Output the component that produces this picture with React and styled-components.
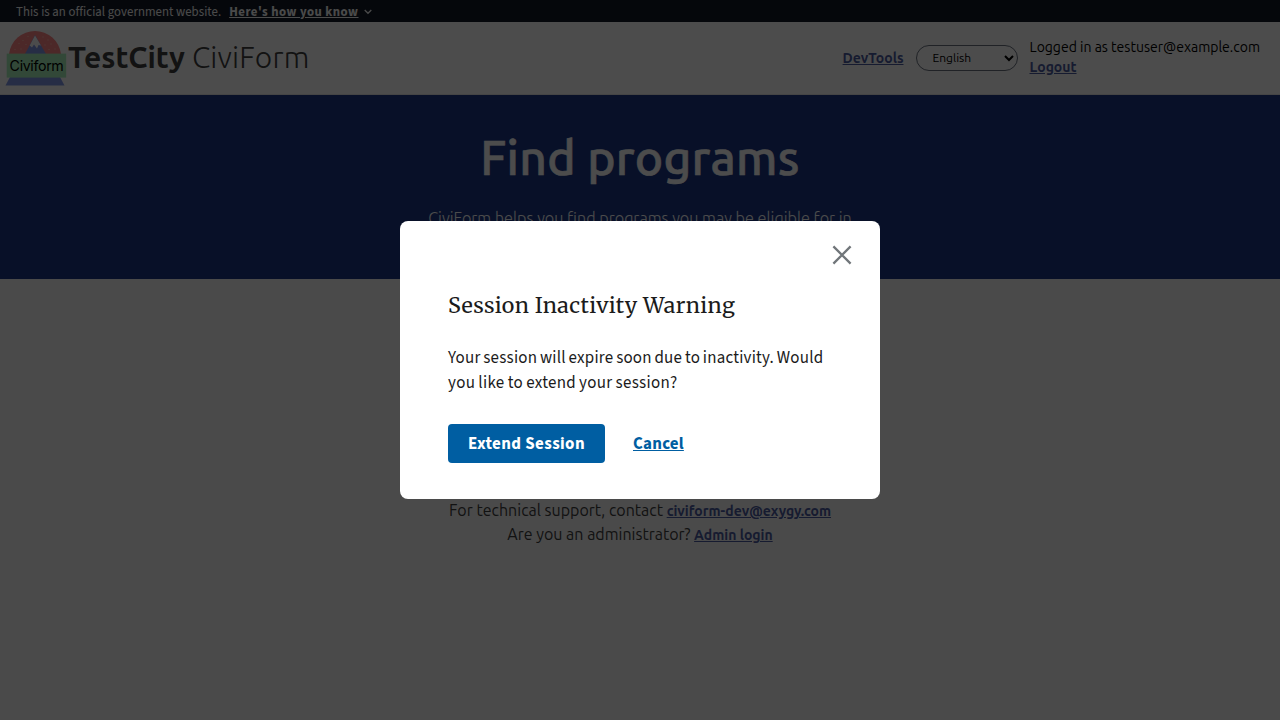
import React from "react";
import styled, { createGlobalStyle } from "styled-components";

const ubuntu = `"Ubuntu", "Noto Sans", "Open Sans", sans-serif`;
const source = `"Source Sans 3", "Noto Sans CJK SC", sans-serif`;
const merri = `"Merriweather", "DejaVu Serif", serif`;

const GlobalStyle = createGlobalStyle`
  * { box-sizing: border-box; }
  body { margin: 0; background: #f8f8f8; color: #1b1b1b; overflow: hidden; font-family: ${ubuntu}; }
  h1, h2, p { margin: 0; font-weight: 400; }
`;

const Page = styled.div`
  height: 720px;
  overflow: hidden;
`;

const Banner = styled.div`
  height: 22px;
  padding: 1px 0 0 16px;
  display: flex;
  align-items: center;
  background: #111827;
  color: #f8f8f8;
  font-family: ${source};
  font-size: 12.8px;
  letter-spacing: 0.05px;
  line-height: 22px;
  white-space: nowrap;
`;

const BannerButton = styled.button`
  border: 0;
  padding: 0;
  margin: 0 5px 0 8px;
  background: none;
  color: inherit;
  font: 700 12.8px/22px ${source};
  letter-spacing: 0.48px;
  text-decoration: underline;
`;

const Header = styled.header`
  height: 73px;
  padding: 0 20px 0 5px;
  display: flex;
  align-items: center;
  background: #fff;
  border-bottom: 1px solid #e6e6e6;
  white-space: nowrap;
`;

const Logo = styled.svg`
  width: 62px;
  height: 58px;
  flex: none;
`;

const Brand = styled.div`
  margin: -3px auto 0 1px;
  color: #3d3d3d;
  font-size: 30px;
  line-height: 40px;
  font-weight: 300;
  letter-spacing: 0.15px;
  b { font-weight: 700; letter-spacing: 0; }
`;

const Link = styled.a`
  color: #4b5aa0;
  font-size: 14px;
  line-height: 20px;
  font-weight: 700;
  text-decoration: underline;
`;

const Language = styled.select`
  width: 102px;
  height: 26px;
  margin: 0 12px;
  padding: 0 0 2px 12px;
  border: 1px solid #6b7280;
  border-radius: 13px;
  background: #fff;
  color: #000;
  font: 400 12px ${ubuntu};
`;

const Account = styled.div`
  display: flex;
  flex-direction: column;
  align-items: flex-start;
  width: 230.5px;
  margin-top: -2px;
  font-size: 14px;
  line-height: 20px;
  color: #000;
`;

const Hero = styled.section`
  height: 184px;
  padding-top: 31px;
  background: #1b3786;
  color: #fff;
  text-align: center;
`;

const HeroTitle = styled.h1`
  font-size: 48px;
  font-weight: 500;
  line-height: 62px;
  letter-spacing: 0.25px;
  -webkit-text-stroke: 0.6px #fff;
`;

const HeroText = styled.p`
  width: 424px;
  margin: 18px auto 0;
  font-size: 16.25px;
  font-weight: 300;
  line-height: 24px;
  white-space: nowrap;
`;

const Support = styled.footer`
  margin-top: 219px;
  text-align: center;
  font-size: 16px;
  font-weight: 300;
  line-height: 24px;
  color: #3d3d3d;
  p { height: 24px; }
`;

const Overlay = styled.div`
  position: fixed;
  inset: 0;
  display: flex;
  align-items: center;
  justify-content: center;
  background: rgba(0, 0, 0, 0.7);
`;

const Modal = styled.section`
  position: relative;
  width: 480px;
  height: 278px;
  padding: 70px 48px 36px;
  border-radius: 8px;
  background: #fff;
  font-family: ${source};
`;

const Close = styled.button`
  position: absolute;
  top: 24px;
  right: 28px;
  width: 20px;
  height: 20px;
  padding: 0;
  border: 0;
  background: none;
  svg { display: block; }
`;

const ModalTitle = styled.h2`
  font-family: ${merri};
  font-size: 21.44px;
  line-height: 30px;
  letter-spacing: 0.36px;
  white-space: nowrap;
`;

const ModalText = styled.p`
  margin-top: 25px;
  font-size: 16.96px;
  line-height: 25px;
  white-space: nowrap;
`;

const TextLine = styled.span`
  display: block;
  letter-spacing: ${(p) => p.$spacing};
  word-spacing: ${(p) => p.$wordSpacing};
`;

const Actions = styled.div`
  margin-top: 28px;
  display: flex;
  align-items: center;
`;

const Primary = styled.button`
  width: 157px;
  height: 39px;
  padding: 0;
  border: 0;
  border-radius: 4px;
  background: #005ea2;
  color: #fff;
  font: 700 16.96px/16px ${source};
  letter-spacing: 0.4px;
  white-space: nowrap;
`;

const Cancel = styled.button`
  margin: 0 0 0 28px;
  padding: 0;
  border: 0;
  background: none;
  color: #005ea2;
  font: 700 16.96px/20px ${source};
  letter-spacing: 0.22px;
  text-decoration: underline;
`;

export default function App() {
  return (
    <>
      <GlobalStyle />
      <Page>
        <Banner>
          <span>This is an official government website.</span>
          <BannerButton>Here's how you know</BannerButton>
          <svg width="8" height="6" viewBox="0 0 8 6" fill="none" stroke="#f8f8f8" strokeWidth="1.3">
            <path d="M0.7 1 L4 4.3 L7.3 1" />
          </svg>
        </Banner>
        <Header>
          <Logo viewBox="5 29 62 58">
            <path d="M9 54 A26.2 26.2 0 0 1 61 54 Z" fill="#ff8585" />
            <path d="M25 54 L35 35 L46 54 Z" fill="#8097e6" />
            <path d="M35 35.5 L29.7 45.5 L32 47.5 L34 44.5 L37 48.5 L38.5 45 L41 45.5 Z" fill="#fff" />
            <g fill="#ffb8ac">
              <circle cx="28" cy="36.5" r=".7" /><circle cx="23" cy="40.5" r=".7" />
              <circle cx="19" cy="43.5" r=".7" /><circle cx="26" cy="44.5" r=".7" />
              <circle cx="15" cy="49.5" r=".7" /><circle cx="21" cy="49" r=".7" />
              <circle cx="43" cy="37" r=".7" /><circle cx="48" cy="40" r=".7" />
              <circle cx="51" cy="44" r=".7" /><circle cx="45" cy="45" r=".7" />
              <circle cx="55" cy="49" r=".7" /><circle cx="49" cy="49.5" r=".7" />
            </g>
            <path d="M10 77 H60 L64.5 85.5 H5.5 Z" fill="#8097e6" />
            <rect x="6.7" y="53.6" width="59.5" height="24" fill="#a8f2bd" />
            <text x="9.6" y="71.4" fontFamily="Inter, sans-serif" fontSize="14.2" textLength="54.2" lengthAdjust="spacing">Civiform</text>
          </Logo>
          <Brand><b>TestCity</b> CiviForm</Brand>
          <Link>DevTools</Link>
          <Language defaultValue="en"><option value="en">English</option></Language>
          <Account>
            <span>Logged in as testuser@example.com</span>
            <Link>Logout</Link>
          </Account>
        </Header>
        <Hero>
          <HeroTitle>Find programs</HeroTitle>
          <HeroText>CiviForm helps you find programs you may be eligible for in</HeroText>
        </Hero>
        <Support>
          <p>For technical support, contact <Link>civiform-dev@exygy.com</Link></p>
          <p>Are you an administrator? <Link>Admin login</Link></p>
        </Support>
      </Page>
      <Overlay>
        <Modal>
          <Close aria-label="Close">
            <svg width="20" height="20" viewBox="0 0 20 20" stroke="#71767a" strokeWidth="2.3">
              <path d="M1.4 1.4 L18.6 18.6 M18.6 1.4 L1.4 18.6" />
            </svg>
          </Close>
          <ModalTitle>Session Inactivity Warning</ModalTitle>
          <ModalText>
            <TextLine $spacing="0.23px" $wordSpacing="-0.9px">Your session will expire soon due to inactivity. Would</TextLine>
            <TextLine $spacing="0.3px" $wordSpacing="-0.5px">you like to extend your session?</TextLine>
          </ModalText>
          <Actions>
            <Primary>Extend Session</Primary>
            <Cancel>Cancel</Cancel>
          </Actions>
        </Modal>
      </Overlay>
    </>
  );
}
